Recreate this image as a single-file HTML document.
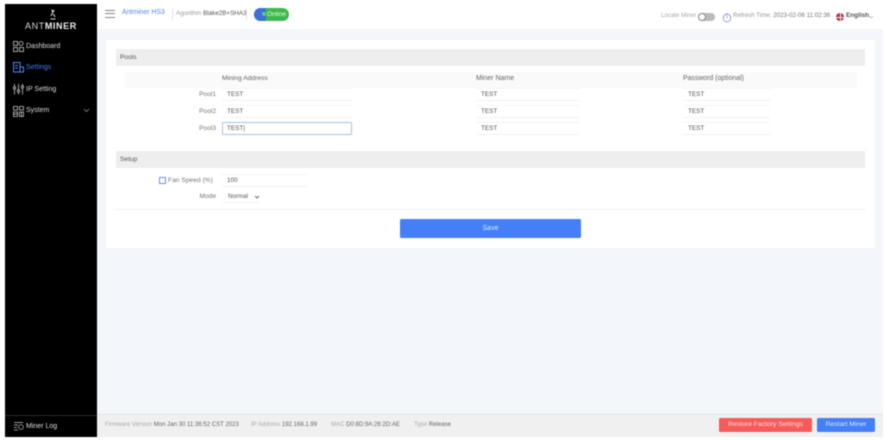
<!DOCTYPE html>
<html><head><meta charset="utf-8">
<style>
*{box-sizing:border-box}
html,body{margin:0;padding:0;width:888px;height:441px;overflow:hidden;background:#fff;font-family:"Liberation Sans",sans-serif;}
.a{position:absolute;white-space:nowrap}
#w{position:absolute;left:0;top:0;width:888px;height:441px;filter:blur(0.45px)}
.t{font-size:6.6px;line-height:10px;color:#555}
.m{font-size:7px;line-height:10px;color:#d8d8d8}
.i{position:absolute;background:#fff;border-top:1px solid #f5f5f5;border-bottom:1px solid #f2f2f2;height:13px;font-size:6.4px;line-height:11px;color:#555;padding-left:5px}
</style></head><body>
<div id="w">
<!-- main bg -->
<div class="a" style="left:97px;top:29px;width:786px;height:385px;background:#f3f6fb"></div>
<!-- sidebar -->
<div class="a" style="left:5px;top:4px;width:92px;height:433px;background:#000"></div>
<div class="a" style="left:5px;top:415px;width:92px;height:1px;background:#2a2a2a"></div>
<svg class="a" style="left:48px;top:8px" width="10" height="14" viewBox="0 0 10 14"><path d="M4 1.5 L4.5 5 L3 8 M5.5 6 L7 9 M2.5 11 L7.5 11" stroke="#ddd" stroke-width="1" fill="none"/><circle cx="5.5" cy="3" r="1" fill="#ddd"/></svg>
<div class="a" style="left:25px;top:21px;font-size:9px;line-height:11px;letter-spacing:.6px;color:#d8d8d8">ANT<b style="color:#eee">MINER</b></div>
<!-- menu icons -->
<svg class="a" style="left:13px;top:41px" width="11" height="11" viewBox="0 0 11 11" fill="none" stroke="#c8c8c8" stroke-width=".8"><rect x=".5" y=".5" width="4" height="4"/><circle cx="8" cy="2.5" r="2"/><rect x=".5" y="6.5" width="4" height="4"/><rect x="6.5" y="6.5" width="4" height="4"/></svg>
<div class="a m" style="left:26px;top:42px">Dashboard</div>
<svg class="a" style="left:13px;top:62px" width="11" height="11" viewBox="0 0 11 11" fill="none" stroke="#4a86f0" stroke-width="1"><path d="M.5 .5H7V10H.5ZM7 5H10.5V10H7M2 3.5H5M2 6H5"/></svg>
<div class="a m" style="left:26px;top:63px;color:#3f7df0">Settings</div>
<svg class="a" style="left:13px;top:84px" width="11" height="11" viewBox="0 0 11 11" fill="none" stroke="#c8c8c8" stroke-width=".8"><path d="M1.5 0V10.5M5.5 0V10.5M9.5 0V10.5"/><circle cx="1.5" cy="4" r="1.2" fill="#000"/><circle cx="5.5" cy="7" r="1.2" fill="#000"/><circle cx="9.5" cy="3" r="1.2" fill="#000"/></svg>
<div class="a m" style="left:26px;top:85px">IP Setting</div>
<svg class="a" style="left:13px;top:106px" width="11" height="11" viewBox="0 0 11 11" fill="none" stroke="#c8c8c8" stroke-width=".8"><path d="M.5 .5H4.5V4H.5ZM6.5 .5H10.5V4H6.5ZM.5 6H4.5V10.5H.5ZM.5 8H4.5M6.5 6H10.5V10.5H6.5ZM8.5 6V10.5"/></svg>
<div class="a m" style="left:26px;top:106px">System</div>
<svg class="a" style="left:83px;top:108px" width="7" height="5" viewBox="0 0 7 5" fill="none" stroke="#888" stroke-width=".8"><path d="M1 1L3.5 3.5L6 1"/></svg>
<svg class="a" style="left:14px;top:421px" width="10" height="10" viewBox="0 0 10 10" fill="none" stroke="#ccc" stroke-width=".7"><path d="M0 1.5H9M0 4H4M0 6.5H3M0 9H4"/><circle cx="7" cy="6" r="2.3"/></svg>
<div class="a m" style="left:26px;top:422px;color:#ddd">Miner Log</div>
<!-- header -->
<div class="a" style="left:105px;top:10px;width:10px;height:1px;background:#888"></div>
<div class="a" style="left:105px;top:13px;width:10px;height:1px;background:#888"></div>
<div class="a" style="left:105px;top:17px;width:10px;height:1px;background:#888"></div>
<div class="a t" style="left:122px;top:8px;font-size:6.9px;color:#4a86f0">Antminer HS3</div>
<div class="a" style="left:172px;top:9px;width:1px;height:11px;background:#e4e4e4"></div>
<div class="a t" style="left:176px;top:9px;font-size:6.3px;color:#999">Agorithm <span style="color:#555">Blake2B+SHA3</span></div>
<div class="a" style="left:246px;top:9px;width:1px;height:11px;background:#e4e4e4"></div>
<div class="a" style="left:254px;top:8px;width:35px;height:13px;border-radius:7px;background:#3cb84a"></div>
<div class="a" style="left:254px;top:8px;width:12px;height:13px;border-radius:7px 0 0 7px;background:#3f6fd8"></div>
<div class="a" style="left:262px;top:12px;width:4px;height:4px;border-radius:50%;background:#5fd06a"></div>
<div class="a t" style="left:267px;top:10px;color:#e8ffe8;font-size:6.6px">Online</div>
<div class="a t" style="left:661px;top:11px;color:#aaa;font-size:6.1px">Locate Miner</div>
<div class="a" style="left:698px;top:13px;width:17px;height:8px;border-radius:4px;background:#bbb"></div>
<div class="a" style="left:698px;top:13px;width:8px;height:8px;border-radius:50%;background:#fff;border:1px solid #888"></div>
<svg class="a" style="left:722px;top:12px" width="10" height="11" viewBox="0 0 10 11" fill="none" stroke="#8a8ae0" stroke-width=".8"><circle cx="5" cy="6" r="3.8"/><path d="M5 1V3M5 4V6.5"/></svg>
<div class="a t" style="left:733px;top:11px;color:#999;font-size:6.2px">Refresh Time: <span style="color:#777">2023-02-06 11:02:36</span></div>
<div class="a" style="left:836px;top:13px;width:8px;height:8px;border-radius:50%;background:#b3324a"></div>
<div class="a" style="left:836px;top:16.5px;width:8px;height:1px;background:#eee"></div>
<div class="a" style="left:839.5px;top:13px;width:1px;height:8px;background:#eee"></div>
<div class="a t" style="left:846px;top:11px;color:#555;font-size:6.4px;font-weight:bold">English</div>
<svg class="a" style="left:868px;top:15px" width="6" height="4" viewBox="0 0 6 4" fill="none" stroke="#aaa" stroke-width=".7"><path d="M1 1L3 3L5 1"/></svg>
<!-- card -->
<div class="a" style="left:106px;top:40px;width:769px;height:208px;background:#fff"></div>
<div class="a" style="left:116px;top:49px;width:749px;height:17px;background:#eee"></div>
<div class="a t" style="left:120px;top:53px">Pools</div>
<div class="a" style="left:125px;top:72px;width:732px;height:16px;background:#fafafa"></div>
<div class="a t" style="left:222px;top:74px;color:#666;font-size:6.7px">Mining Address</div>
<div class="a t" style="left:476px;top:74px;color:#666;font-size:7px">Miner Name</div>
<div class="a t" style="left:683px;top:74px;color:#666;font-size:6.9px">Password (optional)</div>
<div class="a t" style="left:183px;top:90px;width:33px;text-align:right;color:#777">Pool1</div>
<div class="a t" style="left:183px;top:107px;width:33px;text-align:right;color:#777">Pool2</div>
<div class="a t" style="left:183px;top:124px;width:33px;text-align:right;color:#777">Pool3</div>
<div class="i" style="left:222px;top:88px;width:130px;">TEST</div>
<div class="i" style="left:222px;top:105px;width:130px;">TEST</div>
<div class="i" style="left:222px;top:122px;width:130px;border:1px solid #a5c2f2;border-radius:1px;line-height:11px;padding-left:4px">TEST|</div>
<div class="i" style="left:476px;top:88px;width:104px;">TEST</div>
<div class="i" style="left:476px;top:105px;width:104px;">TEST</div>
<div class="i" style="left:476px;top:122px;width:104px;">TEST</div>
<div class="i" style="left:683px;top:88px;width:87px;">TEST</div>
<div class="i" style="left:683px;top:105px;width:87px;">TEST</div>
<div class="i" style="left:683px;top:122px;width:87px;">TEST</div>
<div class="a" style="left:116px;top:151px;width:749px;height:17px;background:#eee"></div>
<div class="a t" style="left:120px;top:155px">Setup</div>
<div class="a" style="left:159px;top:177px;width:7px;height:7px;border:1px solid #6d94d8"></div>
<div class="a t" style="left:168px;top:176px;color:#777;font-size:6.7px">Fan Speed (%)</div>
<div class="i" style="left:222px;top:174px;width:85px;">100</div>
<div class="a t" style="left:183px;top:192px;width:33px;text-align:right;color:#777">Mode</div>
<div class="a" style="left:222px;top:191px;width:38px;height:12px;background:#fff;border-bottom:1px solid #f5f5f5"></div>
<div class="a t" style="left:228px;top:192px;font-size:6.2px">Normal</div>
<svg class="a" style="left:254px;top:195px" width="6" height="4" viewBox="0 0 6 4" fill="none" stroke="#444" stroke-width=".8"><path d="M1 1L3 3L5 1"/></svg>
<div class="a" style="left:116px;top:209px;width:749px;height:1px;background:#eee"></div>
<div class="a" style="left:400px;top:219px;width:181px;height:19px;background:#447ff7;border-radius:1.5px;color:#dce8ff;font-size:7px;line-height:19px;text-align:center">Save</div>
<!-- footer -->
<div class="a" style="left:97px;top:414px;width:786px;height:23px;background:#f0f0f0;border-top:1px solid #e2e2e2"></div>
<div class="a t" style="left:105px;top:420px;font-size:6.05px;color:#aaa">Firmware Version <span style="color:#666">Mon Jan 30 11:36:52 CST 2023</span></div>
<div class="a t" style="left:251px;top:420px;font-size:6.05px;color:#aaa">IP Address <span style="color:#666">192.168.1.99</span></div>
<div class="a t" style="left:331px;top:420px;font-size:6.05px;color:#aaa">MAC <span style="color:#666">D0:8D:9A:26:2D:AE</span></div>
<div class="a t" style="left:414px;top:420px;font-size:6.05px;color:#aaa">Type <span style="color:#666">Release</span></div>
<div class="a" style="left:719px;top:418px;width:93px;height:14px;background:#f55b5b;border-radius:1.5px;color:#ffd8d8;font-size:6.8px;line-height:14px;text-align:center">Restore Factory Settings</div>
<div class="a" style="left:817px;top:418px;width:58px;height:14px;background:#447ff7;border-radius:1.5px;color:#dce8ff;font-size:6.8px;line-height:14px;text-align:center">Restart Miner</div>
</div>
</body></html>
